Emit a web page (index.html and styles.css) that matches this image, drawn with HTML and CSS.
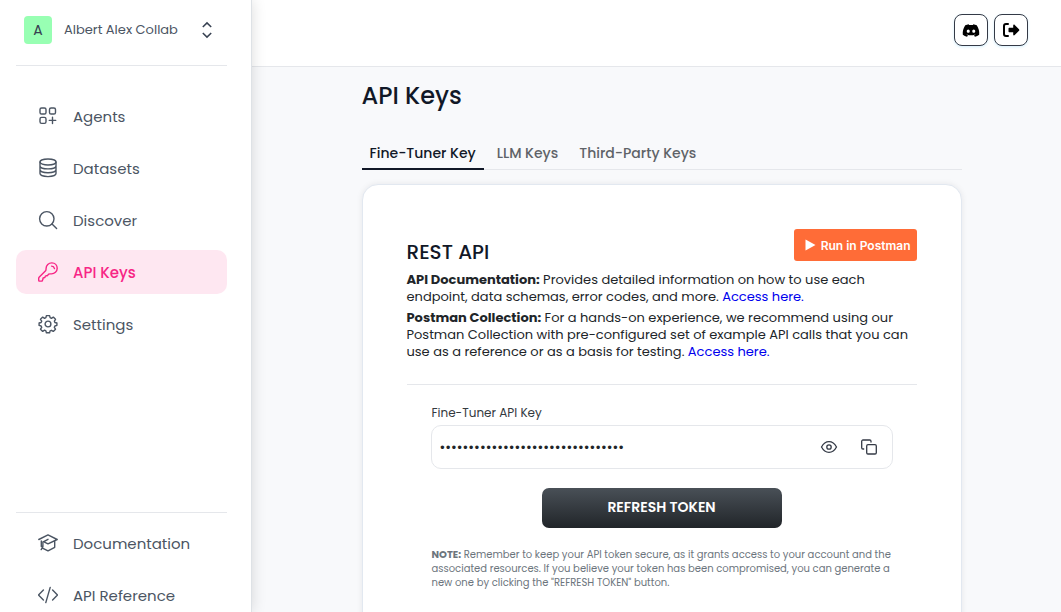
FILE: index.html
```html
<!DOCTYPE html>
<html lang="en">
<head>
<meta charset="utf-8">
<meta name="viewport" content="width=device-width, initial-scale=1">
<title>API Keys</title>
<link rel="stylesheet" href="styles.css">
</head>
<body>
<div class="app">
  <aside class="sidebar">
    <button class="workspace" type="button">
      <span class="workspace-badge">A</span>
      <span class="workspace-name">Albert Alex Collab</span>
      <svg class="workspace-arrows" viewBox="0 0 12 18" aria-hidden="true"><path d="M1.8 6 6 1.9 10.2 6M1.8 12 6 16.1 10.2 12"/></svg>
    </button>
    <nav class="nav">
      <a class="nav-item" href="#agents">
        <svg class="icon" viewBox="0 0 20 20" aria-hidden="true"><rect x="2" y="2" width="6" height="6" rx="1.6"/><rect x="11.500" y="2" width="6" height="6" rx="1.6"/><rect x="2" y="11.400" width="6" height="6" rx="1.6"/><path d="M14.500 11.200v6.400M11.300 14.400h6.400"/></svg>
        Agents</a>
      <a class="nav-item" href="#datasets">
        <svg class="icon" viewBox="0 0 20 20" aria-hidden="true"><ellipse cx="10" cy="4" rx="8" ry="3"/><path d="M2 4v11.6c0 1.7 3.6 3 8 3s8-1.300 8-3V4M2 7.900c0 1.700 3.600 3 8 3s8-1.300 8-3M2 11.800c0 1.700 3.600 3 8 3s8-1.300 8-3"/></svg>
        Datasets</a>
      <a class="nav-item" href="#discover">
        <svg class="icon" viewBox="0 0 20 20" aria-hidden="true"><circle cx="8.800" cy="8.800" r="7.200"/><path d="m14 14 4.600 4.500"/></svg>
        Discover</a>
      <a class="nav-item nav-item-active" href="#api-keys" aria-current="page">
        <svg class="icon" viewBox="0 0 20 20" aria-hidden="true"><path d="M13.800.900c3.200 0 5.400 2.200 5.400 5.400s-2.700 5.700-5.900 5.600c-1.200 0-2-.200-2.500.200l-1.300 1.300c-.5.500-1.200.3-1.800.5-.7.200-.4 1.100-.8 1.500-.5.500-1.400.1-1.800.6-.4.500.1 1.100-.3 1.600-.3.300-.4 1.400-.8 1.500H1.500c-.500 0-.800-.300-.800-.8v-2.100c0-.400.100-.700.400-1l6.500-6.400c.500-.5.500-1.400.5-2.500C8.100 3.300 10.600.900 13.800.900Z"/><path d="M13.600 4.100c1.500.1 2.500.9 2.900 2.500"/></svg>
        API Keys</a>
      <a class="nav-item" href="#settings">
        <svg class="icon" viewBox="0 0 20 20" aria-hidden="true"><circle cx="10" cy="10" r="2.900"/><path d="M8.400 1.600h3.200l.5 2.100 1.300.6 1.900-1.200 2.200 2.200-1.100 1.900.5 1.300 2 .5v2.300l-2 .7-.6 1.300 1.200 1.900-2.200 2.200-1.900-1.100-1.300.5-.5 2H8.400l-.5-2-1.300-.6-1.900 1.200-2.200-2.200 1.200-1.900-.6-1.300-2-.6V9l2-.5.600-1.300-1.200-1.900 2.200-2.200 1.900 1.200 1.300-.6Z"/></svg>
        Settings</a>
    </nav>
    <nav class="nav nav-bottom">
      <a class="nav-item" href="#documentation">
        <svg class="icon" viewBox="0 0 20 20" aria-hidden="true"><path d="M.8 6.500 10 1.900l9.200 4.600L10 10.900 6.500 9.200M10 6.300 4.800 9.200M3.300 8v5.500M16.700 8v6.300L10 17.900l-5.500-2.800M4.900 9v4.600L3.200 16.600M3.300 13.300h1.600"/></svg>
        Documentation</a>
      <a class="nav-item" href="#api-reference">
        <svg class="icon" viewBox="0 0 20 20" aria-hidden="true"><path d="M5.400 5 .5 10l4.900 5M14.600 5l4.900 5-4.900 5M12.200 2.400 7.800 17.600"/></svg>
        API Reference</a>
    </nav>
  </aside>

  <div class="page">
    <header class="topbar">
      <a class="square-button" href="#discord" aria-label="Discord">
        <svg class="discord-icon" viewBox="0 0 640 512" aria-hidden="true"><path d="M524.500 69.800a1.500 1.500 0 0 0-.8-.7A485 485 0 0 0 404 32a1.800 1.800 0 0 0-1.900.9 337 337 0 0 0-14.900 30.600 448 448 0 0 0-134.400 0 310 310 0 0 0-15.100-30.600 1.900 1.900 0 0 0-1.900-.9A484 484 0 0 0 116 69.100a1.700 1.700 0 0 0-.8.700C39 183.700 18.200 294.700 28.400 404.400a2 2 0 0 0 .8 1.400A488 488 0 0 0 176 480a1.900 1.900 0 0 0 2.100-.7 348 348 0 0 0 30-48.800 1.900 1.900 0 0 0-1-2.600 321 321 0 0 1-45.900-21.900 1.900 1.900 0 0 1-.2-3.100c3.100-2.300 6.200-4.700 9.100-7.100a1.800 1.800 0 0 1 1.900-.3c96.200 43.900 200.400 43.900 295.500 0a1.800 1.800 0 0 1 1.900.2c2.900 2.400 6 4.900 9.100 7.200a1.900 1.900 0 0 1-.2 3.100 301 301 0 0 1-45.900 21.800 1.900 1.900 0 0 0-1 2.600 391 391 0 0 0 30 48.800 1.900 1.900 0 0 0 2.100.7 486 486 0 0 0 147.200-74.100 1.900 1.900 0 0 0 .8-1.400C623.700 277.600 590.900 167.500 524.500 69.800ZM222.500 337.600c-29 0-52.800-26.600-52.800-59.200s23.300-59.300 52.800-59.300c29.700 0 53.300 26.800 52.800 59.200 0 32.700-23.400 59.300-52.800 59.300Zm195.400 0c-29 0-52.800-26.600-52.800-59.200s23.300-59.300 52.800-59.300c29.700 0 53.300 26.800 52.800 59.200 0 32.700-23.200 59.300-52.800 59.300Z"/></svg>
      </a>
      <button class="square-button" type="button" aria-label="Log out">
        <svg class="logout-icon" viewBox="0 0 18 16" aria-hidden="true"><path class="logout-frame" d="M6 2H4a2 2 0 0 0-2 2v8a2 2 0 0 0 2 2h2"/><path d="M11.200 3.500c0-1 .9-1.200 1.500-.6l4.300 4.300c.4.500.4 1.100 0 1.600l-4.300 4.300c-.6.600-1.500.4-1.500-.6v-2.200H7.500c-.6 0-1-.4-1-1V6.700c0-.6.400-1 1-1h3.700Z"/></svg>
      </button>
    </header>

    <main class="content">
      <h1 class="page-title">API Keys</h1>
      <div class="tabs" role="tablist">
        <button class="tab tab-active" type="button" role="tab" aria-selected="true">Fine-Tuner Key</button>
        <button class="tab" type="button" role="tab" aria-selected="false">LLM Keys</button>
        <button class="tab" type="button" role="tab" aria-selected="false">Third-Party Keys</button>
      </div>

      <section class="card">
        <div class="card-head">
          <h2 class="card-title">REST API</h2>
          <a class="postman" href="#postman">
            <svg class="play" viewBox="0 0 11 12" aria-hidden="true"><path d="M.5.500 10.500 6 .5 11.500Z"/></svg>
            Run in Postman</a>
        </div>
        <div class="intro">
          <p><b>API Documentation:</b> Provides detailed information on how to use each endpoint, data schemas, error codes, and more. <a href="#docs">Access here.</a></p>
          <p><b>Postman Collection:</b> For a hands-on experience, we recommend using our Postman Collection with pre-configured set of example API calls that you can use as a reference or as a basis for testing. <a href="#collection">Access here.</a></p>
        </div>
        <form class="token">
          <label class="token-label" for="api-key">Fine-Tuner API Key</label>
          <div class="token-field">
            <input class="token-input" id="api-key" type="password" value="a1b2c3d4e5f6a7b8c9d0e1f2a3b4c5d6" readonly>
            <button class="field-button" type="button" aria-label="Show key"><svg viewBox="0 0 18 18" aria-hidden="true"><path d="M1.500 9C3.300 5.600 6 3.700 9 3.700s5.700 1.900 7.500 5.300c-1.800 3.400-4.500 5.300-7.500 5.300S3.300 12.400 1.500 9Z"/><circle cx="9" cy="9" r="2.200"/></svg></button>
            <button class="field-button" type="button" aria-label="Copy key"><svg viewBox="0 0 18 18" aria-hidden="true"><rect x="6.700" y="6.700" width="9.600" height="9.300" rx="1.300"/><path d="M3.700 11H3a1.300 1.300 0 0 1-1.300-1.300V3.300A1.300 1.300 0 0 1 3 2h6.700A1.300 1.300 0 0 1 11 3.300V4"/></svg></button>
          </div>
          <button class="refresh" type="button">REFRESH TOKEN</button>
          <p class="note"><b>NOTE:</b> Remember to keep your API token secure, as it grants access to your account and the associated resources. If you believe your token has been compromised, you can generate a new one by clicking the "REFRESH TOKEN" button.</p>
        </form>
      </section>
    </main>
  </div>
</div>
</body>
</html>
```
FILE: styles.css
```css
* { box-sizing: border-box; }

body {
  margin: 0;
  font-family: Poppins, Inter, sans-serif;
  font-size: 13px;
  color: #212529;
  background: #f8f9fb;
}

button, input { font: inherit; color: inherit; }
h1, h2, p { margin: 0; }

.app { display: flex; height: 100vh; overflow: hidden; }

.sidebar {
  flex: 0 0 252px;
  padding: 0 24px 16px 16px;
  background: #fff;
  border-right: 1px solid #dee2e6;
  box-shadow: 0 0 14px rgba(0, 0, 0, 0.14);
  z-index: 1;
  overflow-y: auto;
  scrollbar-width: none;
}

.workspace {
  display: flex;
  align-items: center;
  width: 100%;
  height: 66px;
  padding: 0 14px 6px 8px;
  background: none;
  border: 0;
  border-bottom: 1px solid #e5e7eb;
  color: #4b5563;
  text-align: left;
}
.workspace-badge {
  width: 28px;
  line-height: 28px;
  margin-right: 12px;
  border-radius: 4px;
  background: #98ffb3;
  text-align: center;
  font-size: 14px;
  color: #374151;
}
.workspace-name { flex: 1; }
.workspace-arrows { width: 12px; height: 18px; fill: none; stroke: #374151; stroke-width: 1.5; }

.nav { display: flex; flex-direction: column; gap: 8px; padding-top: 28px; }
.nav-bottom { margin-top: 166px; padding-top: 8px; border-top: 1px solid #e5e7eb; }
.nav-item {
  display: flex;
  flex: none;
  align-items: center;
  gap: 15px;
  height: 44px;
  padding-left: 22px;
  border-radius: 10px;
  color: #4b5563;
  font-size: 15px;
  text-decoration: none;
}
.nav-item-active { background: #fee7f1; color: #f72585; font-weight: 500; }
.icon {
  width: 20px;
  height: 20px;
  fill: none;
  stroke: currentColor;
  stroke-width: 1.4;
  stroke-linecap: round;
  stroke-linejoin: round;
}

.page { flex: 1; min-width: 0; overflow-y: auto; scrollbar-width: none; }
.topbar {
  display: flex;
  justify-content: flex-end;
  gap: 6px;
  height: 67px;
  padding: 14px 33px 0 0;
  background: #fff;
  border-bottom: 1px solid #e5e7eb;
}
.square-button {
  display: flex;
  align-items: center;
  justify-content: center;
  width: 34px;
  height: 32px;
  padding: 0;
  background: #fff;
  border: 1px solid #343a46;
  border-radius: 8px;
  box-shadow: 0 1px 3px #d5effc;
}
.discord-icon { width: 18px; height: 15px; }
.logout-icon { width: 18px; height: 16px; }
.logout-frame { fill: none; stroke: #000; stroke-width: 2; stroke-linecap: round; }

.content { padding: 14px 0 0 10px; max-width: 610px; margin: 0 auto; }
.page-title { font-size: 24px; line-height: 30px; font-weight: 500; color: #111827; }
.tabs { display: flex; margin-top: 26px; border-bottom: 1px solid #e5e7eb; }
.tab {
  padding: 2px 8px 0;
  height: 33px;
  margin: 0 5px -1px 0;
  background: none;
  border: 0;
  border-bottom: 2px solid transparent;
  font-size: 14px;
  font-weight: 500;
  color: #5f6368;
}
.tab-active { color: #111827; border-color: #111827; }

.card {
  margin-top: 14px;
  padding: 44px 44px 60px;
  background: #fff;
  border: 1px solid #e2e8f0;
  border-radius: 16px;
  box-shadow: 0 0 6px rgba(15, 23, 42, 0.08);
}
.card-head { display: flex; justify-content: space-between; }
.card-title { padding-top: 11px; font-size: 20px; line-height: 24px; font-weight: 500; color: #111827; }
.postman {
  display: flex;
  align-items: center;
  gap: 5px;
  height: 32px;
  padding: 0 6px 0 11px;
  border-radius: 3px;
  background: #ff6c37;
  color: #fff;
  font-family: Inter, sans-serif;
  font-size: 12px;
  font-weight: 600;
  text-decoration: none;
}
.play { width: 11px; height: 12px; fill: #fff; }
.intro {
  display: grid;
  gap: 4px;
  padding: 7px 0 24px;
  line-height: 17px;
  border-bottom: 1px solid #e5e7eb;
}
.intro a { color: #00e; text-decoration: none; }

.token { display: flex; flex-direction: column; padding: 19px 24px 0; }
.token-label { padding-left: 1px; font-size: 12px; line-height: 18px; color: #343a40; }
.token-field {
  display: flex;
  align-items: center;
  height: 44px;
  margin-top: 3px;
  padding: 0 13px 0 8px;
  border: 1px solid #e5e7eb;
  border-radius: 10px;
}
.token-input {
  flex: 1;
  min-width: 0;
  padding: 0;
  border: 0;
  outline: 0;
  background: none;
  font-size: 14px;
}
.field-button { width: 20px; height: 20px; margin-left: 20px; padding: 1px; border: 0; background: none; }
.field-button svg { display: block; width: 18px; height: 18px; fill: none; stroke: #343a46; stroke-width: 1.300; stroke-linecap: round; }
.refresh {
  align-self: center;
  width: 240px;
  height: 40px;
  margin-top: 19px;
  padding: 0 0 2px;
  border: 0;
  border-radius: 7px;
  background: linear-gradient(#495057, #212529);
  color: #fff;
  font-size: 14px;
  font-weight: 600;
}
.note { margin-top: 20px; padding-left: 1px; font-size: 10px; line-height: 14px; color: #6c757d; }
```
